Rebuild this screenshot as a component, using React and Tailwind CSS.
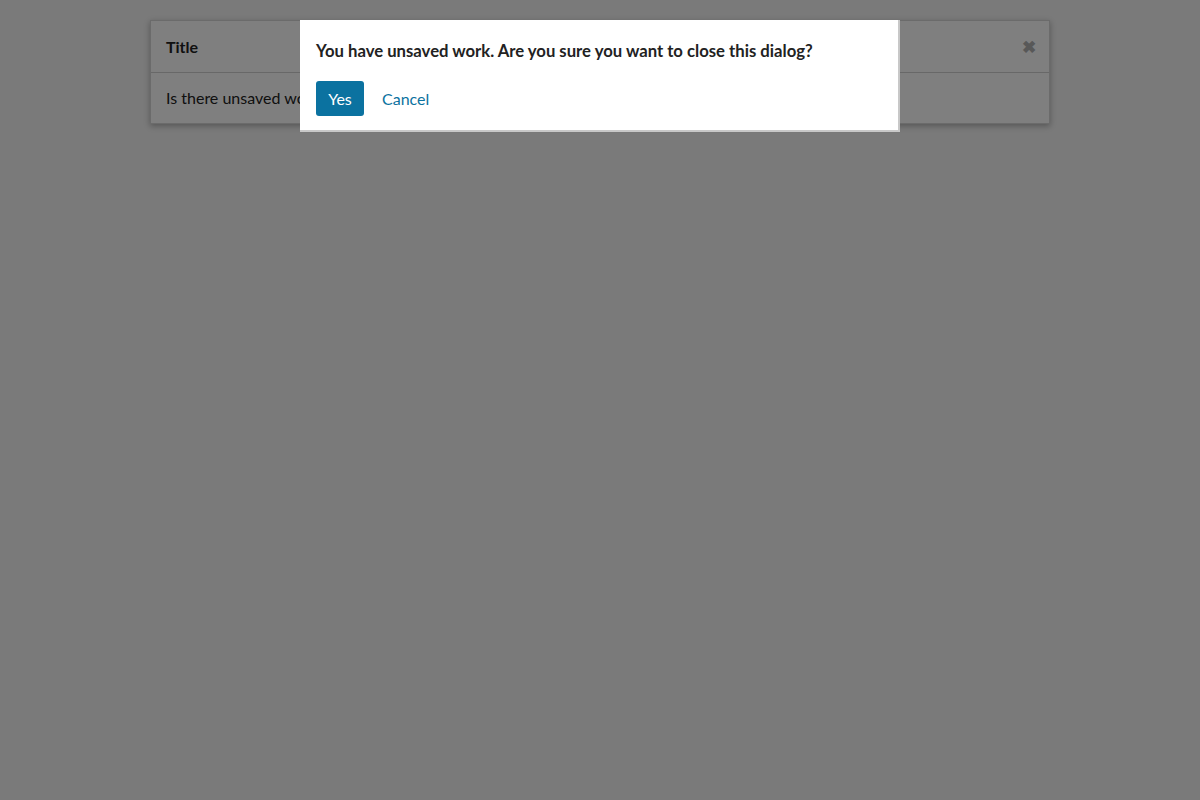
export default function App() {
  return (
    <div className="relative w-[1200px] h-[800px] bg-[#f4f4f4] overflow-hidden" style={{ fontFamily: 'Lato, "Open Sans", sans-serif' }}>
      <div className="w-[900px] mx-auto mt-5 bg-white border border-[#d6d6d6] shadow-[0_2px_6px_rgba(0,0,0,0.3)]">
        <div className="h-[52px] flex items-center justify-between pl-[15px] pr-[13px] border-b border-[#d0d0d0]">
          <span className="text-[16px] font-bold text-[#222]">Title</span>
          <span className="text-[#b0b0b0] text-[17px] font-bold leading-none">✖</span>
        </div>
        <div className="h-[50px] flex items-center px-[15px] text-[16px] text-[#222]">
          Is there unsaved work? Yes
        </div>
      </div>
      <div className="absolute inset-0 bg-[rgba(0,0,0,0.5)]" />
      <div className="absolute left-[300px] top-[20px] w-[600px] bg-white border-r-2 border-b-2 border-[#c8c8c8] px-4 pt-[19px] pb-[14px]">
        <p className="text-[16.7px] font-bold text-[#222] leading-6">You have unsaved work. Are you sure you want to close this dialog?</p>
        <div className="flex items-center gap-[18px] mt-[18px]">
          <button className="w-[48px] h-[35px] rounded-[3px] bg-[#0b72a0] text-white text-[16px]">Yes</button>
          <button className="text-[#0b72a0] text-[16px]">Cancel</button>
        </div>
      </div>
    </div>
  );
}
